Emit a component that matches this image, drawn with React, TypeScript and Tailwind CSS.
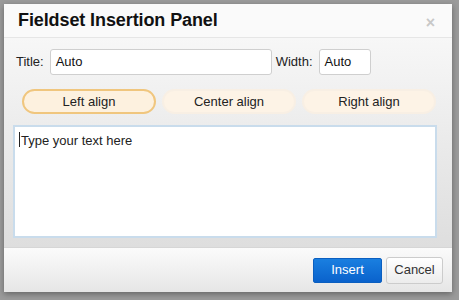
import React from "react";

export default function App() {
  return (
    <div
      className="w-[459px] h-[300px] bg-[#9b9b9b] pt-[4px] pl-[4px] overflow-hidden"
      style={{ fontFamily: '"Liberation Sans", Arial, sans-serif' }}
    >
      <div className="w-[448px] h-[288px] flex flex-col bg-white shadow-[0_2px_6px_rgba(0,0,0,0.35)]">
        {/* Header */}
        <div className="h-[34px] flex items-center justify-between bg-[#fafafa] border-b border-[#e6e6e6] pl-[14px] pr-[17px]">
          <span className="text-[18px] font-bold text-[#111] tracking-[-0.1px]">Fieldset Insertion Panel</span>
          <span className="text-[16px] text-[#c8c8c8] font-bold leading-none mt-[4px]">×</span>
        </div>
        {/* Body */}
        <div className="h-[209px] flex flex-col bg-gradient-to-b from-[#f7f7f7] to-[#dedede] pt-[11px]">
          <div className="flex items-center pl-[12px] text-[13px] text-[#222]">
            <span className="mr-[6px]">Title:</span>
            <div className="w-[222px] h-[26px] bg-white border border-[#cfcfcf] rounded-[3px] flex items-center pl-[5px] text-[13px] text-[#111]">
              Auto
            </div>
            <span className="ml-[4px] mr-[6px]">Width:</span>
            <div className="w-[52px] h-[26px] bg-white border border-[#cfcfcf] rounded-[3px] flex items-center pl-[5px] text-[13px] text-[#111]">
              Auto
            </div>
          </div>
          <div className="flex items-center pl-[18px] gap-[6px] mt-[14px] text-[13px] text-[#222]">
            <div className="w-[134px] h-[25px] rounded-full bg-[#fdf1df] border-2 border-[#f0c67e] flex items-center justify-center">
              Left align
            </div>
            <div className="w-[134px] h-[25px] rounded-full bg-[#fdf3e6] border-2 border-[#f8efe4] flex items-center justify-center">
              Center align
            </div>
            <div className="w-[134px] h-[25px] rounded-full bg-[#fdf3e6] border-2 border-[#f8efe4] flex items-center justify-center">
              Right align
            </div>
          </div>
          <div className="ml-[9px] mt-[11px] w-[424px] h-[113px] bg-white border-2 border-[#c9dcec] pl-[4px] pt-[4px] text-[13px] text-[#222] flex items-start">
            <span className="w-px h-[15px] bg-[#222] mr-[1px] mt-[1px]"></span>
            <span>Type your text here</span>
          </div>
        </div>
        {/* Footer */}
        <div className="flex-1 flex items-center justify-end gap-[4px] pr-[9px] bg-gradient-to-b from-[#fbfbfb] to-[#e6e6e6] border-t border-[#d6d6d6]">
          <div className="w-[69px] h-[25px] rounded-[2px] bg-gradient-to-b from-[#1a7fe0] to-[#0a62cc] border border-[#0b5fc0] text-white text-[13px] flex items-center justify-center">
            Insert
          </div>
          <div className="w-[57px] h-[27px] rounded-[3px] bg-gradient-to-b from-[#ffffff] to-[#ececec] border border-[#cccccc] text-[#333] text-[13px] flex items-center justify-center">
            Cancel
          </div>
        </div>
      </div>
    </div>
  );
}
